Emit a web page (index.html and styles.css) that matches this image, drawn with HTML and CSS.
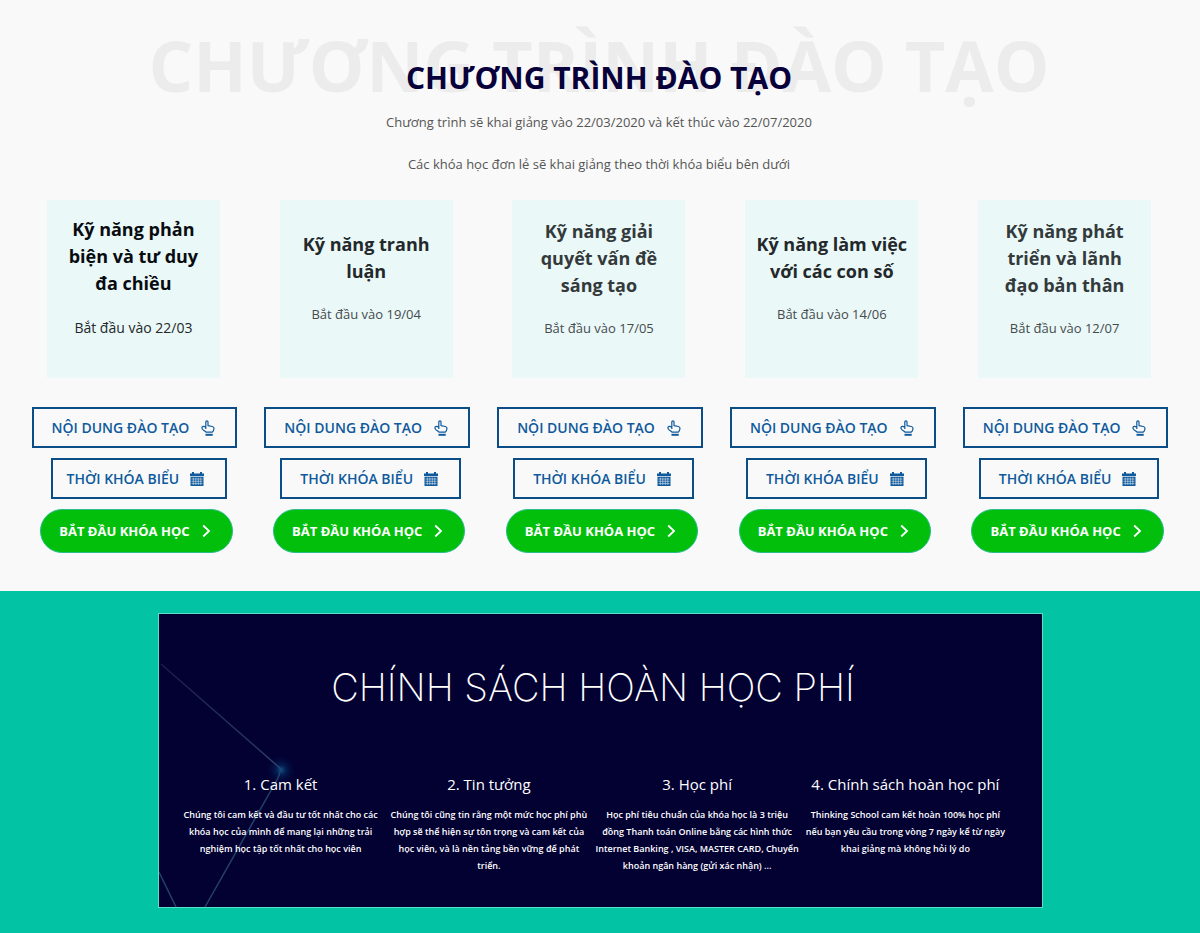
FILE: index.html
```html
<!DOCTYPE html>
<html lang="vi">
<head>
    <meta charset="UTF-8">
    <meta name="viewport" content="width=device-width, initial-scale=1">
    <title>Chương trình đào tạo</title>
    <link rel="stylesheet" href="styles.css">
</head>
<body>

    <!-- shared icons -->
    <svg class="sprite" aria-hidden="true">
        <symbol id="icon-hand" viewBox="0 0 14 16">
            <path d="M4.8 9V2.200c0-1.700 2.200-1.700 2.200 0v3.400l4.300.9c1.300.3 1.800.9 1.700 2-.1 1.500-.7 2.600-1.700 3.700H5C4.200 11.200 2.900 10.600 1.600 9.300.4 8 .9 6.500 2.200 6.300c.9-.1 1.700.3 2.600 1" fill="none" stroke="currentColor" stroke-width="1.200" stroke-linejoin="round"/>
            <path d="M4.500 14.800h7.200" fill="none" stroke="currentColor" stroke-width="2"/>
        </symbol>
        <symbol id="icon-calendar" viewBox="0 0 14 14">
            <path d="M0 1.500h2V0h2v1.500h6V0h2v1.500h2V4H0z" fill="currentColor"/>
            <path d="M.5 4.700h13V14H.5z" fill="currentColor"/>
            <path d="M1.500 7h11M1.500 9.300h11M1.500 11.600h11M3.300 5.500V13M5.800 5.500V13M8.300 5.500V13M10.800 5.500V13" stroke="#f9f9f9" stroke-width=".5"/>
        </symbol>
        <symbol id="icon-arrow" viewBox="0 0 9 14">
            <path d="M1.200 1.500L7 7l-5.800 5.500" fill="none" stroke="currentColor" stroke-width="1.800"/>
        </symbol>
    </svg>

    <section class="program">
        <header class="program-header">
            <span class="ghost" aria-hidden="true">CHƯƠNG TRÌNH ĐÀO TẠO</span>
            <h1>CHƯƠNG TRÌNH ĐÀO TẠO</h1>
            <p>Chương trình sẽ khai giảng vào 22/03/2020 và kết thúc vào 22/07/2020</p>
            <p>Các khóa học đơn lẻ sẽ khai giảng theo thời khóa biểu bên dưới</p>
        </header>

        <div class="courses">
            <article class="course course-active">
                <div class="card">
                    <h2>Kỹ năng phản<br>biện và tư duy<br>đa chiều</h2>
                    <p>Bắt đầu vào 22/03</p>
                </div>
                <button type="button" class="btn btn-content">NỘI DUNG ĐÀO TẠO <svg class="hand"><use href="#icon-hand"/></svg></button>
                <button type="button" class="btn btn-schedule">THỜI KHÓA BIỂU <svg class="calendar"><use href="#icon-calendar"/></svg></button>
                <button type="button" class="btn btn-start">BẮT ĐẦU KHÓA HỌC <svg class="arrow"><use href="#icon-arrow"/></svg></button>
            </article>
            <article class="course">
                <div class="card">
                    <h2>Kỹ năng tranh<br>luận</h2>
                    <p>Bắt đầu vào 19/04</p>
                </div>
                <button type="button" class="btn btn-content">NỘI DUNG ĐÀO TẠO <svg class="hand"><use href="#icon-hand"/></svg></button>
                <button type="button" class="btn btn-schedule">THỜI KHÓA BIỂU <svg class="calendar"><use href="#icon-calendar"/></svg></button>
                <button type="button" class="btn btn-start">BẮT ĐẦU KHÓA HỌC <svg class="arrow"><use href="#icon-arrow"/></svg></button>
            </article>
            <article class="course course-light">
                <div class="card">
                    <h2>Kỹ năng giải<br>quyết vấn đề<br>sáng tạo</h2>
                    <p>Bắt đầu vào 17/05</p>
                </div>
                <button type="button" class="btn btn-content">NỘI DUNG ĐÀO TẠO <svg class="hand"><use href="#icon-hand"/></svg></button>
                <button type="button" class="btn btn-schedule">THỜI KHÓA BIỂU <svg class="calendar"><use href="#icon-calendar"/></svg></button>
                <button type="button" class="btn btn-start">BẮT ĐẦU KHÓA HỌC <svg class="arrow"><use href="#icon-arrow"/></svg></button>
            </article>
            <article class="course">
                <div class="card">
                    <h2>Kỹ năng làm việc<br>với các con số</h2>
                    <p>Bắt đầu vào 14/06</p>
                </div>
                <button type="button" class="btn btn-content">NỘI DUNG ĐÀO TẠO <svg class="hand"><use href="#icon-hand"/></svg></button>
                <button type="button" class="btn btn-schedule">THỜI KHÓA BIỂU <svg class="calendar"><use href="#icon-calendar"/></svg></button>
                <button type="button" class="btn btn-start">BẮT ĐẦU KHÓA HỌC <svg class="arrow"><use href="#icon-arrow"/></svg></button>
            </article>
            <article class="course course-light">
                <div class="card">
                    <h2>Kỹ năng phát<br>triển và lãnh<br>đạo bản thân</h2>
                    <p>Bắt đầu vào 12/07</p>
                </div>
                <button type="button" class="btn btn-content">NỘI DUNG ĐÀO TẠO <svg class="hand"><use href="#icon-hand"/></svg></button>
                <button type="button" class="btn btn-schedule">THỜI KHÓA BIỂU <svg class="calendar"><use href="#icon-calendar"/></svg></button>
                <button type="button" class="btn btn-start">BẮT ĐẦU KHÓA HỌC <svg class="arrow"><use href="#icon-arrow"/></svg></button>
            </article>
        </div>
    </section>

    <section class="refund">
        <div class="panel">
            <svg class="lines" viewBox="0 0 140 294" aria-hidden="true">
                <defs>
                    <radialGradient id="glow">
                        <stop offset="0" stop-color="#0b5c92"/>
                        <stop offset=".3" stop-color="#073a70" stop-opacity=".5"/>
                        <stop offset="1" stop-color="#020132" stop-opacity="0"/>
                    </radialGradient>
                    <linearGradient id="fade" x1="0" y1="0" x2="1" y2="1">
                        <stop offset="0" stop-color="#1b1c48"/>
                        <stop offset="1" stop-color="#30406f"/>
                    </linearGradient>
                </defs>
                <circle cx="122" cy="156" r="16" fill="url(#glow)"/>
                <path d="M2 50L122 155" fill="none" stroke="url(#fade)" stroke-width="1.500"/>
                <path d="M122 155L119 164L46 293M0 258L17 293" fill="none" stroke="#25406b" stroke-width="1.500"/>
            </svg>
            <h2>CHÍNH SÁCH HOÀN HỌC PHÍ</h2>
            <div class="policies">
                <div class="policy">
                    <h3>1. Cam kết</h3>
                    <p>Chúng tôi cam kết và đầu tư tốt nhất cho các<br>khóa học của mình để mang lại những trải<br>nghiệm học tập tốt nhất cho học viên</p>
                </div>
                <div class="policy">
                    <h3>2. Tin tưởng</h3>
                    <p>Chúng tôi cũng tin rằng một mức học phí phù<br>hợp sẽ thể hiện sự tôn trọng và cam kết của<br>học viên, và là nền tảng bền vững để phát<br>triển.</p>
                </div>
                <div class="policy">
                    <h3>3. Học phí</h3>
                    <p>Học phí tiêu chuẩn của khóa học là 3 triệu<br>đồng Thanh toán Online bằng các hình thức<br>Internet Banking , VISA, MASTER CARD, Chuyển<br>khoản ngân hàng (gửi xác nhận) ...</p>
                </div>
                <div class="policy">
                    <h3>4. Chính sách hoàn học phí</h3>
                    <p>Thinking School cam kết hoàn 100% học phí<br>nếu bạn yêu cầu trong vòng 7 ngày kể từ ngày<br>khai giảng mà không hỏi lý do</p>
                </div>
            </div>
        </div>
    </section>

</body>
</html>
```

FILE: styles.css
```css
* {
    box-sizing: border-box;
}
body {
    margin: 0;
    background-color: #02c3a3;
    font-family: "Open Sans", "Noto Sans", sans-serif;
}
h1, h2, h3, p {
    margin: 0;
}
.sprite {
    position: absolute;
    width: 0;
    height: 0;
}

/* training programme */
.program {
    padding: 56px 19px 38px 17px;
    background-color: #f9f9f9;
}
.program-header {
    position: relative;
    text-align: center;
}
.program-header h1 {
    position: relative;
    margin-bottom: 10px;
    color: #07003a;
    font-size: 30px;
    line-height: 44px;
    font-weight: 700;
}
.ghost {
    position: absolute;
    top: -39px;
    left: 0;
    right: 0;
    color: #ececec;
    font-size: 70px;
    line-height: 96px;
    font-weight: 700;
    white-space: nowrap;
}
.program-header p {
    position: relative;
    margin-bottom: 18px;
    color: #555;
    font-size: 13px;
    line-height: 24px;
}
.courses {
    display: grid;
    grid-template-columns: repeat(5, 1fr);
    padding-top: 6px;
}
.course {
    display: flex;
    flex-direction: column;
    align-items: center;
}
.card {
    display: flex;
    flex-direction: column;
    justify-content: center;
    width: 173px;
    min-height: 178px;
    margin-bottom: 29px;
    background-color: #ebf8f8;
    color: #23282a;
    text-align: center;
}
.card h2 {
    margin-bottom: 17px;
    font-size: 18px;
    line-height: 27px;
    font-weight: 700;
}
.card p {
    margin-bottom: 21px;
    color: #444b4d;
    font-size: 13px;
    line-height: 24px;
}
.course-light .card {
    color: #333a3b;
}
.course-active .card {
    color: #080c10;
}
.course-active .card p {
    margin-bottom: 22px;
    color: #23282a;
    font-size: 14px;
    line-height: 27px;
}
.btn {
    display: flex;
    align-items: center;
    padding: 0 18px;
    border: 2px solid #0b4d86;
    background-color: transparent;
    color: #0f5a9c;
    font-family: inherit;
    font-size: 14px;
    line-height: 20px;
    font-weight: 600;
    white-space: nowrap;
    cursor: pointer;
}
.btn-content {
    height: 41px;
    margin: 0 0 10px 2px;
    padding-right: 20px;
}
.btn-schedule {
    height: 41px;
    margin: 0 0 10px 9px;
    padding-right: 21px;
}
.course-active .btn-schedule {
    padding-left: 14px;
    margin-left: 11px;
}
.btn-start {
    height: 44px;
    margin-left: 6px;
    border: 1px solid #2cbc8c;
    border-radius: 22px;
    background-color: #02bf0c;
    color: #fff;
    font-size: 13px;
    font-weight: 700;
}
.hand {
    width: 14px;
    height: 16px;
    margin-left: 12px;
}
.calendar {
    width: 14px;
    height: 14px;
    margin-left: 11px;
}
.arrow {
    width: 9px;
    height: 14px;
    margin: 0 3px 0 12px;
}

/* refund policy */
.refund {
    padding: 22px 20px 25px;
}
.panel {
    position: relative;
    max-width: 885px;
    margin: 0 auto;
    padding: 48px 32px 33px 18px;
    border: 1px solid #5be0c6;
    background-color: #020132;
    color: #fff;
    text-align: center;
}
.lines {
    position: absolute;
    top: 0;
    left: 0;
    width: 140px;
    height: 294px;
}
.panel h2 {
    position: relative;
    margin-bottom: 60px;
    font-family: Inter, Lato, sans-serif;
    font-size: 38px;
    line-height: 50px;
    font-weight: 200;
}
.policies {
    position: relative;
    display: grid;
    grid-template-columns: repeat(4, 1fr);
}
.policy h3 {
    margin-bottom: 10px;
    font-size: 15px;
    line-height: 24px;
    font-weight: 400;
}
.policy p {
    font-size: 9px;
    line-height: 17px;
    font-weight: 600;
    white-space: nowrap;
}
```
